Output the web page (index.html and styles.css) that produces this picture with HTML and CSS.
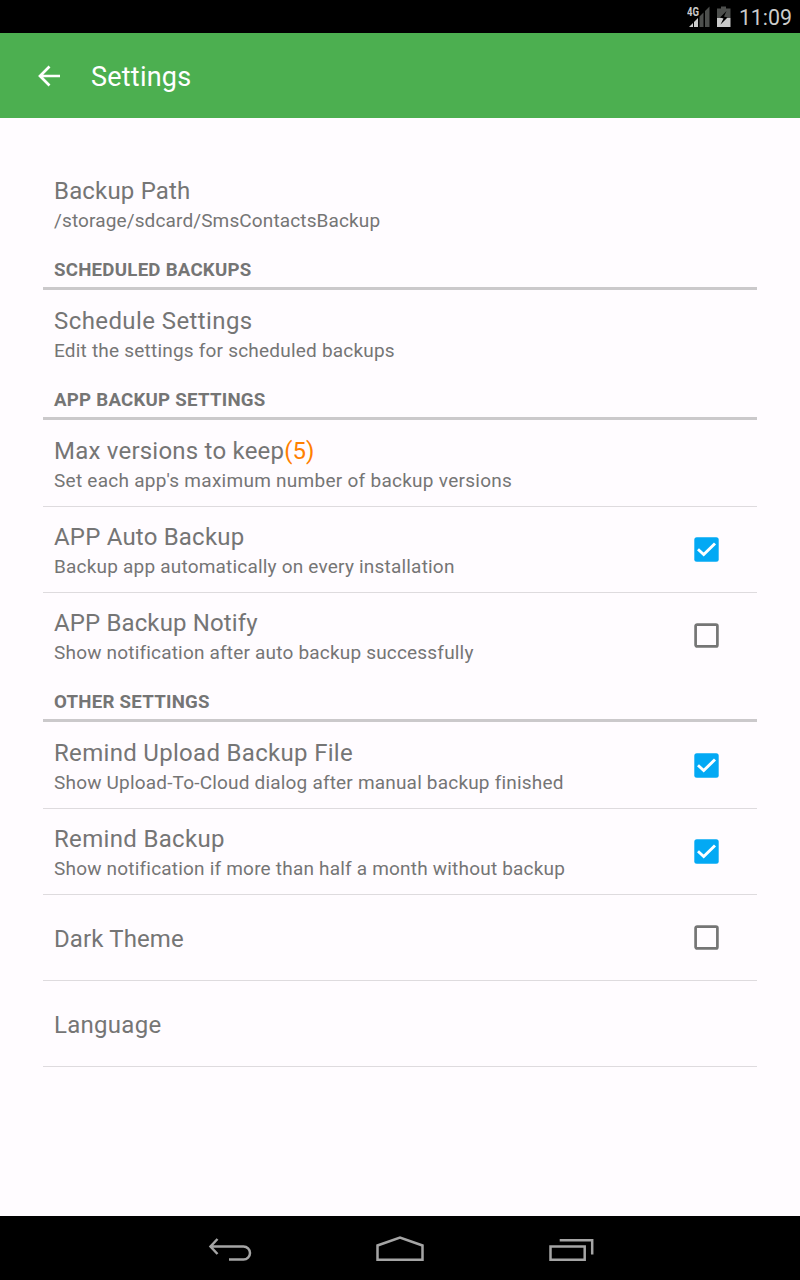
FILE: index.html
```html
<!DOCTYPE html>
<html lang="en">
<head>
<meta charset="utf-8">
<title>Settings</title>
<link rel="stylesheet" href="styles.css">
</head>
<body>
<div class="screen">
  <div class="status">
    <svg class="signal" width="25" height="24" viewBox="0 0 25 24"><text x="0" y="12" class="net" textLength="12" lengthAdjust="spacingAndGlyphs">4G</text><path d="M2 23L6 19V23ZM7 18L11 14V23H7Z" fill="#cbcbcb"/><path d="M12.500 12.500L16.500 8.500V23H12.500ZM18 7L22.500 2.500V23H18Z" fill="#4d4f4d"/></svg>
    <svg class="battery" width="16" height="24" viewBox="0 0 16 24"><path d="M5 2.500h5v2h4.500v9.500H1V4.500h4z" fill="#4d4f4d"/><path d="M1 14h13.500v9H1z" fill="#cbcbcb"/><path d="M10.500 7L4 13.500L7.500 14.500L4.500 20.500L11.500 13.500L8 12.500Z" fill="#000"/></svg>
    <span class="clock">11:09</span>
  </div>
  <header class="appbar">
    <svg class="up" width="24" height="24" viewBox="0 0 24 24"><path d="M23 12H3M12.500 2.500L3 12L12.500 21.500" fill="none" stroke="#fff" stroke-width="2.700"/></svg>
    <h1>Settings</h1>
  </header>
  <main class="list">
    <section class="group">
      <div class="row"><div class="text"><div class="title t-path">Backup Path</div><div class="sub s-path">/storage/sdcard/SmsContactsBackup</div></div></div>
    </section>
    <section class="group">
      <h2>SCHEDULED BACKUPS</h2>
      <div class="row"><div class="text"><div class="title t-schedule">Schedule Settings</div><div class="sub s-schedule">Edit the settings for scheduled backups</div></div></div>
    </section>
    <section class="group">
      <h2>APP BACKUP SETTINGS</h2>
      <div class="row"><div class="text"><div class="title t-max">Max versions to keep<span class="count">(5)</span></div><div class="sub s-max">Set each app's maximum number of backup versions</div></div></div>
      <div class="row"><div class="text"><div class="title t-auto">APP Auto Backup</div><div class="sub s-auto">Backup app automatically on every installation</div></div>
        <svg class="check" width="25" height="25" viewBox="0 0 25 25"><rect x=".3" y=".3" width="24.400" height="24.400" rx="2.500" fill="#03a9f4"/><path d="M4 12.300L9.700 17.500L21 6.500" fill="none" stroke="#fff" stroke-width="2.900"/></svg></div>
      <div class="row"><div class="text"><div class="title t-notify">APP Backup Notify</div><div class="sub s-notify">Show notification after auto backup successfully</div></div>
        <svg class="check" width="25" height="25" viewBox="0 0 25 25"><rect x="1.600" y="1.600" width="21.800" height="21.800" rx="1.500" fill="none" stroke="#757575" stroke-width="2.700"/></svg></div>
    </section>
    <section class="group">
      <h2>OTHER SETTINGS</h2>
      <div class="row"><div class="text"><div class="title t-upload">Remind Upload Backup File</div><div class="sub s-upload">Show Upload-To-Cloud dialog after manual backup finished</div></div>
        <svg class="check" width="25" height="25" viewBox="0 0 25 25"><rect x=".3" y=".3" width="24.400" height="24.400" rx="2.500" fill="#03a9f4"/><path d="M4 12.300L9.700 17.500L21 6.500" fill="none" stroke="#fff" stroke-width="2.900"/></svg></div>
      <div class="row"><div class="text"><div class="title t-remind">Remind Backup</div><div class="sub s-remind">Show notification if more than half a month without backup</div></div>
        <svg class="check" width="25" height="25" viewBox="0 0 25 25"><rect x=".3" y=".3" width="24.400" height="24.400" rx="2.500" fill="#03a9f4"/><path d="M4 12.300L9.700 17.500L21 6.500" fill="none" stroke="#fff" stroke-width="2.900"/></svg></div>
      <div class="row"><div class="text single"><div class="title t-dark">Dark Theme</div></div>
        <svg class="check" width="25" height="25" viewBox="0 0 25 25"><rect x="1.600" y="1.600" width="21.800" height="21.800" rx="1.500" fill="none" stroke="#757575" stroke-width="2.700"/></svg></div>
      <div class="row"><div class="text single"><div class="title t-language">Language</div></div></div>
      <div class="end"></div>
    </section>
  </main>
  <nav class="navbar">
    <svg width="48" height="32" viewBox="0 0 48 32"><path d="M12.500 5L5.500 12.500L12.500 20M6 12.500H38.500A6.500 6.500 0 0 1 38.500 25.500H24" fill="none" stroke="#a5a5a5" stroke-width="2.500"/></svg>
    <svg width="48" height="32" viewBox="0 0 48 32"><path d="M1.500 25.700V11.500L24 3.500L46.500 11.500V25.700Z" fill="none" stroke="#a5a5a5" stroke-width="2.500"/></svg>
    <svg width="48" height="32" viewBox="0 0 48 32"><path d="M3.500 12.500H37.700V25.700H3.500ZM12.700 6.200H45.200V20.500" fill="none" stroke="#a5a5a5" stroke-width="2.500"/></svg>
  </nav>
</div>
</body>
</html>
```
FILE: styles.css
```css
body{margin:0;font-family:Roboto,sans-serif;background:#fffcff;color:#757575}
.screen{width:800px;height:1280px;display:flex;flex-direction:column}
.status{box-sizing:border-box;height:33px;padding-right:8px;background:#000;color:#cbcbcb;display:flex;justify-content:flex-end;align-items:center}
.signal{margin:0 4px 2px 0}
.battery{margin:0 7px 2px 0}
.net{font-size:12px;font-weight:700;fill:#cbcbcb}
.clock{font-size:21.330px;line-height:33px;padding-top:2px}
.appbar{height:85px;background:#4caf50;display:flex;align-items:center;padding-left:37px;gap:30px;color:#fff}
.appbar h1{font-size:27px;font-weight:400;margin:2px 0 0;letter-spacing:.220px}
.list{flex:1;padding:42px 43px 0}
.row{box-sizing:border-box;height:86px;padding:0 38px 0 11px;border-top:1px solid transparent;display:flex;justify-content:space-between;align-items:center;white-space:nowrap}
.row + .row,.end{border-top:1px solid #dedbde}
.text{padding-top:0}
.single{padding-top:2px}
.title{font-size:24px;line-height:34px}
.sub{font-size:19px;line-height:26px}
.check{flex:none;margin-bottom:1px}
.count{color:#ff8000;letter-spacing:0}
h2{box-sizing:border-box;height:44px;font-size:18.670px;font-weight:700;letter-spacing:.250px;margin:0;padding:0 11px;border-bottom:3px solid #cbc9cb;line-height:48px}
.navbar{height:64px;background:#000;display:flex;justify-content:center;align-items:center;gap:123px}
.navbar svg{margin-top:4px}
.t-path{letter-spacing:.180px}
.t-schedule{letter-spacing:.410px}
.t-max{letter-spacing:.220px}
.t-auto{letter-spacing:.200px}
.t-notify{letter-spacing:.130px}
.t-upload{letter-spacing:.310px}
.t-remind{letter-spacing:.320px}
.t-dark{letter-spacing:.120px}
.t-language{letter-spacing:.280px}
.s-path{letter-spacing:.130px}
.s-schedule{letter-spacing:.210px}
.s-max{letter-spacing:.270px}
.s-auto{letter-spacing:.200px}
.s-notify{letter-spacing:.190px}
.s-upload{letter-spacing:.190px}
.s-remind{letter-spacing:.200px}
```
